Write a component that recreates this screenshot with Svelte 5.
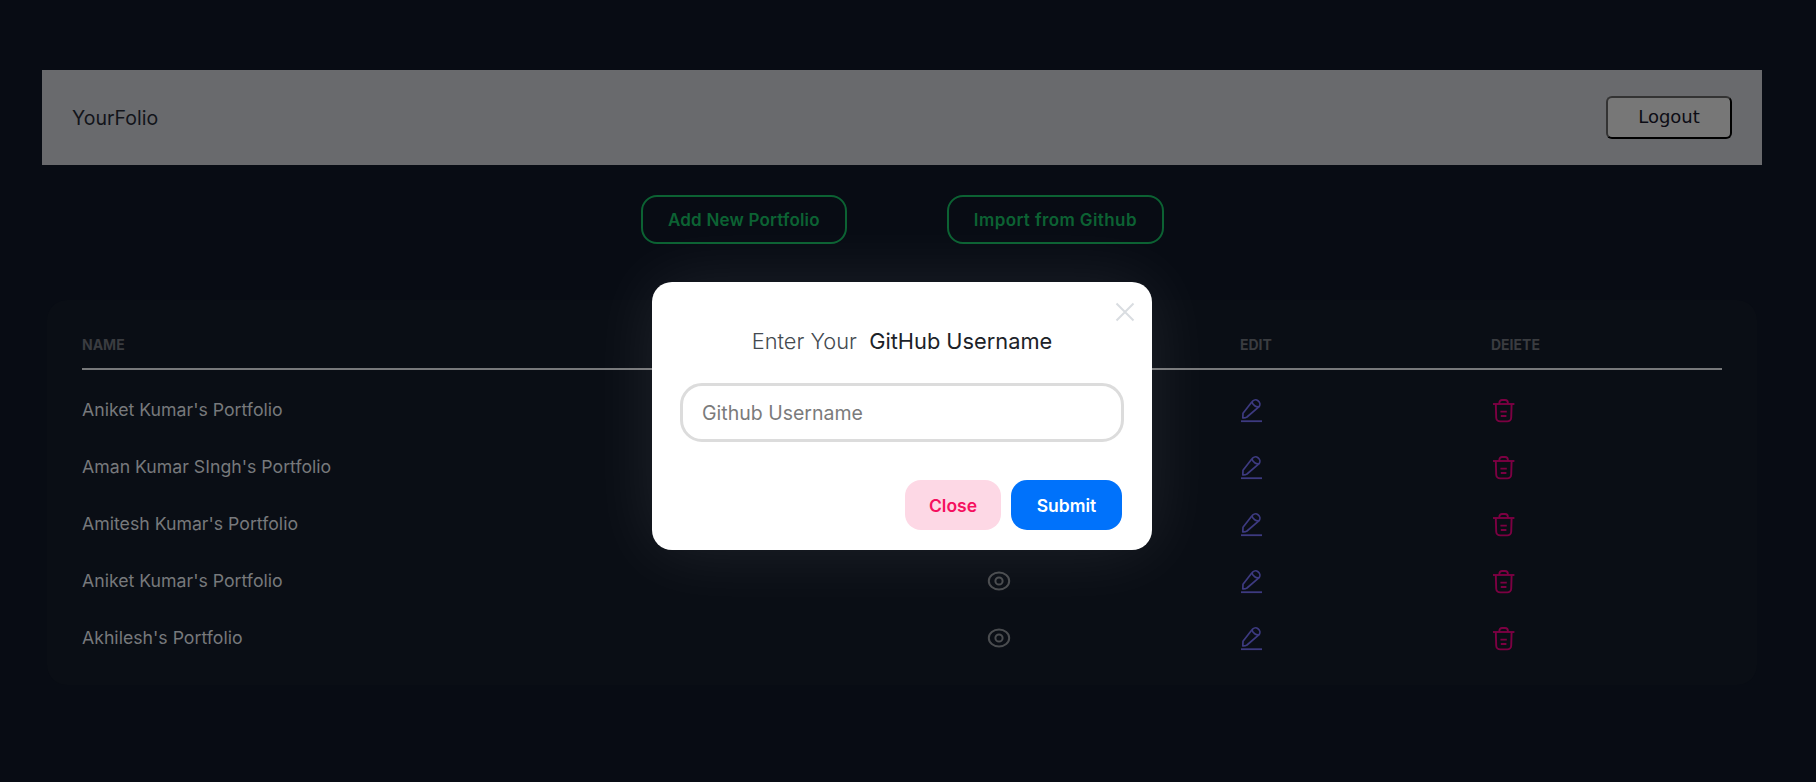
<script>
  const portfolios = [
    "Aniket Kumar's Portfolio",
    "Aman Kumar SIngh's Portfolio",
    "Amitesh Kumar's Portfolio",
    "Aniket Kumar's Portfolio",
    "Akhilesh's Portfolio"
  ];
</script>

<div class="page">
  <nav class="navbar">
    <span class="brand">YourFolio</span>
    <button class="logout">Logout</button>
  </nav>

  <div class="actions">
    <button class="outline">Add New Portfolio</button>
    <button class="outline">Import from Github</button>
  </div>

  <div class="card">
    <table>
      <thead>
        <tr>
          <th>NAME</th>
          <th></th>
          <th>EDIT</th>
          <th>DEIETE</th>
        </tr>
      </thead>
      <tbody>
        {#each portfolios as name}
          <tr>
            <td class="name">{name}</td>
            <td>
              <svg class="eye" width="24" height="20" viewBox="0 0 24 20" fill="none" stroke="currentColor" stroke-width="2">
                <ellipse cx="12" cy="10" rx="10.2" ry="8.4" />
                <circle cx="12" cy="10" r="3.6" />
              </svg>
            </td>
            <td class="icon-cell">
              <svg class="pencil" width="21" height="24" viewBox="0 0 21 24" fill="none" stroke="currentColor" stroke-width="1.7" stroke-linejoin="round">
                <path d="M1.8 18.9 L2 14.2 L11 2.8 a4.2 4.2 0 0 1 7.1 4.9 L6 18 Q4 19.2 1.8 18.9 Z" />
                <path d="M11 2.8 a5 3.4 38 0 0 7.1 4.9" />
                <path d="M0 22.2 H21" stroke-width="1.8" />
              </svg>
            </td>
            <td class="icon-cell">
              <svg class="trash" width="22" height="24" viewBox="0 0 22 24" fill="none" stroke="currentColor" stroke-width="1.9">
                <path d="M0 5 H21.4" />
                <path d="M6.4 5 V3.6 a2.6 2.6 0 0 1 2.6 -2.6 h3.2 a2.6 2.6 0 0 1 2.6 2.6 V5" />
                <path d="M2.8 5 L3.2 18.4 a4 4 0 0 0 4 4 h7 a4 4 0 0 0 4 -4 L18.6 5" />
                <path d="M7.4 12.6 h6.4 M7.8 17 h5.6" />
              </svg>
            </td>
          </tr>
        {/each}
      </tbody>
    </table>
  </div>

  <div class="modal" role="dialog" aria-modal="true">
    <button class="close-x" aria-label="Close">
      <svg width="20" height="20" viewBox="0 0 20 20" stroke="currentColor" stroke-width="2" fill="none">
        <path d="M1.5 1.5 L18.5 18.5 M18.5 1.5 L1.5 18.5" />
      </svg>
    </button>
    <h2 class="modal-title"><span class="light">Enter Your</span> &nbsp;GitHub Username</h2>
    <input class="username" type="text" placeholder="Github Username" />
    <div class="modal-actions">
      <button class="modal-btn btn-close">Close</button>
      <button class="modal-btn btn-submit">Submit</button>
    </div>
  </div>
</div>

<style>
  :global(body) {
    background-color: #080c14;
    font-family: Inter, Roboto, "Liberation Sans", sans-serif;
    overflow: hidden;
  }

  .page {
    position: relative;
    height: 782px;
    padding-top: 70px;
    box-sizing: border-box;
  }

  .navbar {
    margin: 0 54px 0 42px;
    height: 95px;
    background-color: #696a6d;
    display: flex;
    align-items: center;
    justify-content: space-between;
    padding: 0 30px;
    box-sizing: border-box;
  }

  .brand {
    font-size: 19.5px;
    padding-top: 1px;
    color: #12141a;
  }

  .logout {
    width: 126px;
    height: 43px;
    padding: 0 0 2px;
    background-color: #777;
    border: 2px solid;
    border-color: #333 #000 #000 #333;
    border-radius: 6px;
    font-family: "DejaVu Sans", sans-serif;
    font-size: 18px;
    color: #0c0c14;
  }

  .actions {
    display: flex;
    gap: 100px;
    margin-top: 30px;
    padding-left: 641px;
  }

  .outline {
    height: 49px;
    padding: 0 25px;
    background: transparent;
    border: 2px solid #0c6233;
    border-radius: 16px;
    color: #0c6233;
    font-family: inherit;
    font-size: 17px;
    letter-spacing: 0.2px;
    font-weight: 600;
  }

  .outline + .outline {
    letter-spacing: 0.4px;
  }

  .card {
    margin: 56px 59px 0 47px;
    height: 385px;
    padding: 22px 35px;
    box-sizing: border-box;
    background-color: #0a0e15;
    border-radius: 20px;
  }

  table {
    width: 1640px;
    border-collapse: collapse;
    table-layout: fixed;
  }

  th {
    text-align: left;
    font-size: 14px;
    font-weight: 700;
    color: #3a3c40;
    height: 44px;
    padding: 0 0 2px;
    border-bottom: 2px solid #77787a;
  }

  th:first-child {
    width: 907px;
  }

  th:nth-child(2),
  th:nth-child(3) {
    width: 251px;
  }

  tbody::before {
    content: "";
    display: block;
    height: 11px;
  }

  td {
    height: 57px;
    padding: 0;
    box-sizing: border-box;
    vertical-align: middle;
  }

  .icon-cell {
    padding-top: 3px;
  }

  svg {
    display: block;
  }

  .name {
    font-size: 17.7px;
    color: #77797c;
  }

  .eye {
    color: #4a4c4f;
    margin-left: -2px;
  }

  .pencil {
    color: #3d3a80;
    margin-left: 1px;
  }

  .trash {
    color: #7c0042;
    margin-left: 2px;
  }

  .modal {
    position: absolute;
    left: 652px;
    top: 282px;
    width: 500px;
    height: 268px;
    background-color: #fff;
    border-radius: 20px;
    box-shadow: 0 0 70px rgba(255, 255, 255, 0.09);
    padding: 0 28px;
    box-sizing: border-box;
  }

  .close-x {
    position: absolute;
    top: 20px;
    right: 17px;
    padding: 0;
    background: none;
    border: none;
    color: #d9dde1;
  }

  .modal-title {
    margin: 45px 0 0;
    text-align: center;
    font-size: 21.8px;
    line-height: 28px;
    font-weight: 400;
    color: #1c2228;
  }

  .light {
    font-weight: 300;
    color: #444a50;
  }

  .username {
    display: block;
    width: 444px;
    height: 59px;
    margin-top: 28px;
    padding: 0 19px;
    box-sizing: border-box;
    border: 3px solid #dcdcdc;
    border-radius: 22px;
    background-color: #fff;
    font-family: inherit;
    font-size: 19.5px;
    outline: none;
  }

  .username::placeholder {
    color: #7b7b7b;
  }

  .modal-actions {
    display: flex;
    justify-content: flex-end;
    gap: 10px;
    margin-top: 38px;
    padding-right: 2px;
  }

  .modal-btn {
    height: 50px;
    border: none;
    border-radius: 16px;
    font-family: inherit;
    font-size: 17.5px;
    font-weight: 600;
  }

  .btn-close {
    width: 96px;
    background-color: #fdd8e5;
    color: #f5105f;
  }

  .btn-submit {
    width: 111px;
    background-color: #0072fb;
    color: #fff;
  }
</style>
